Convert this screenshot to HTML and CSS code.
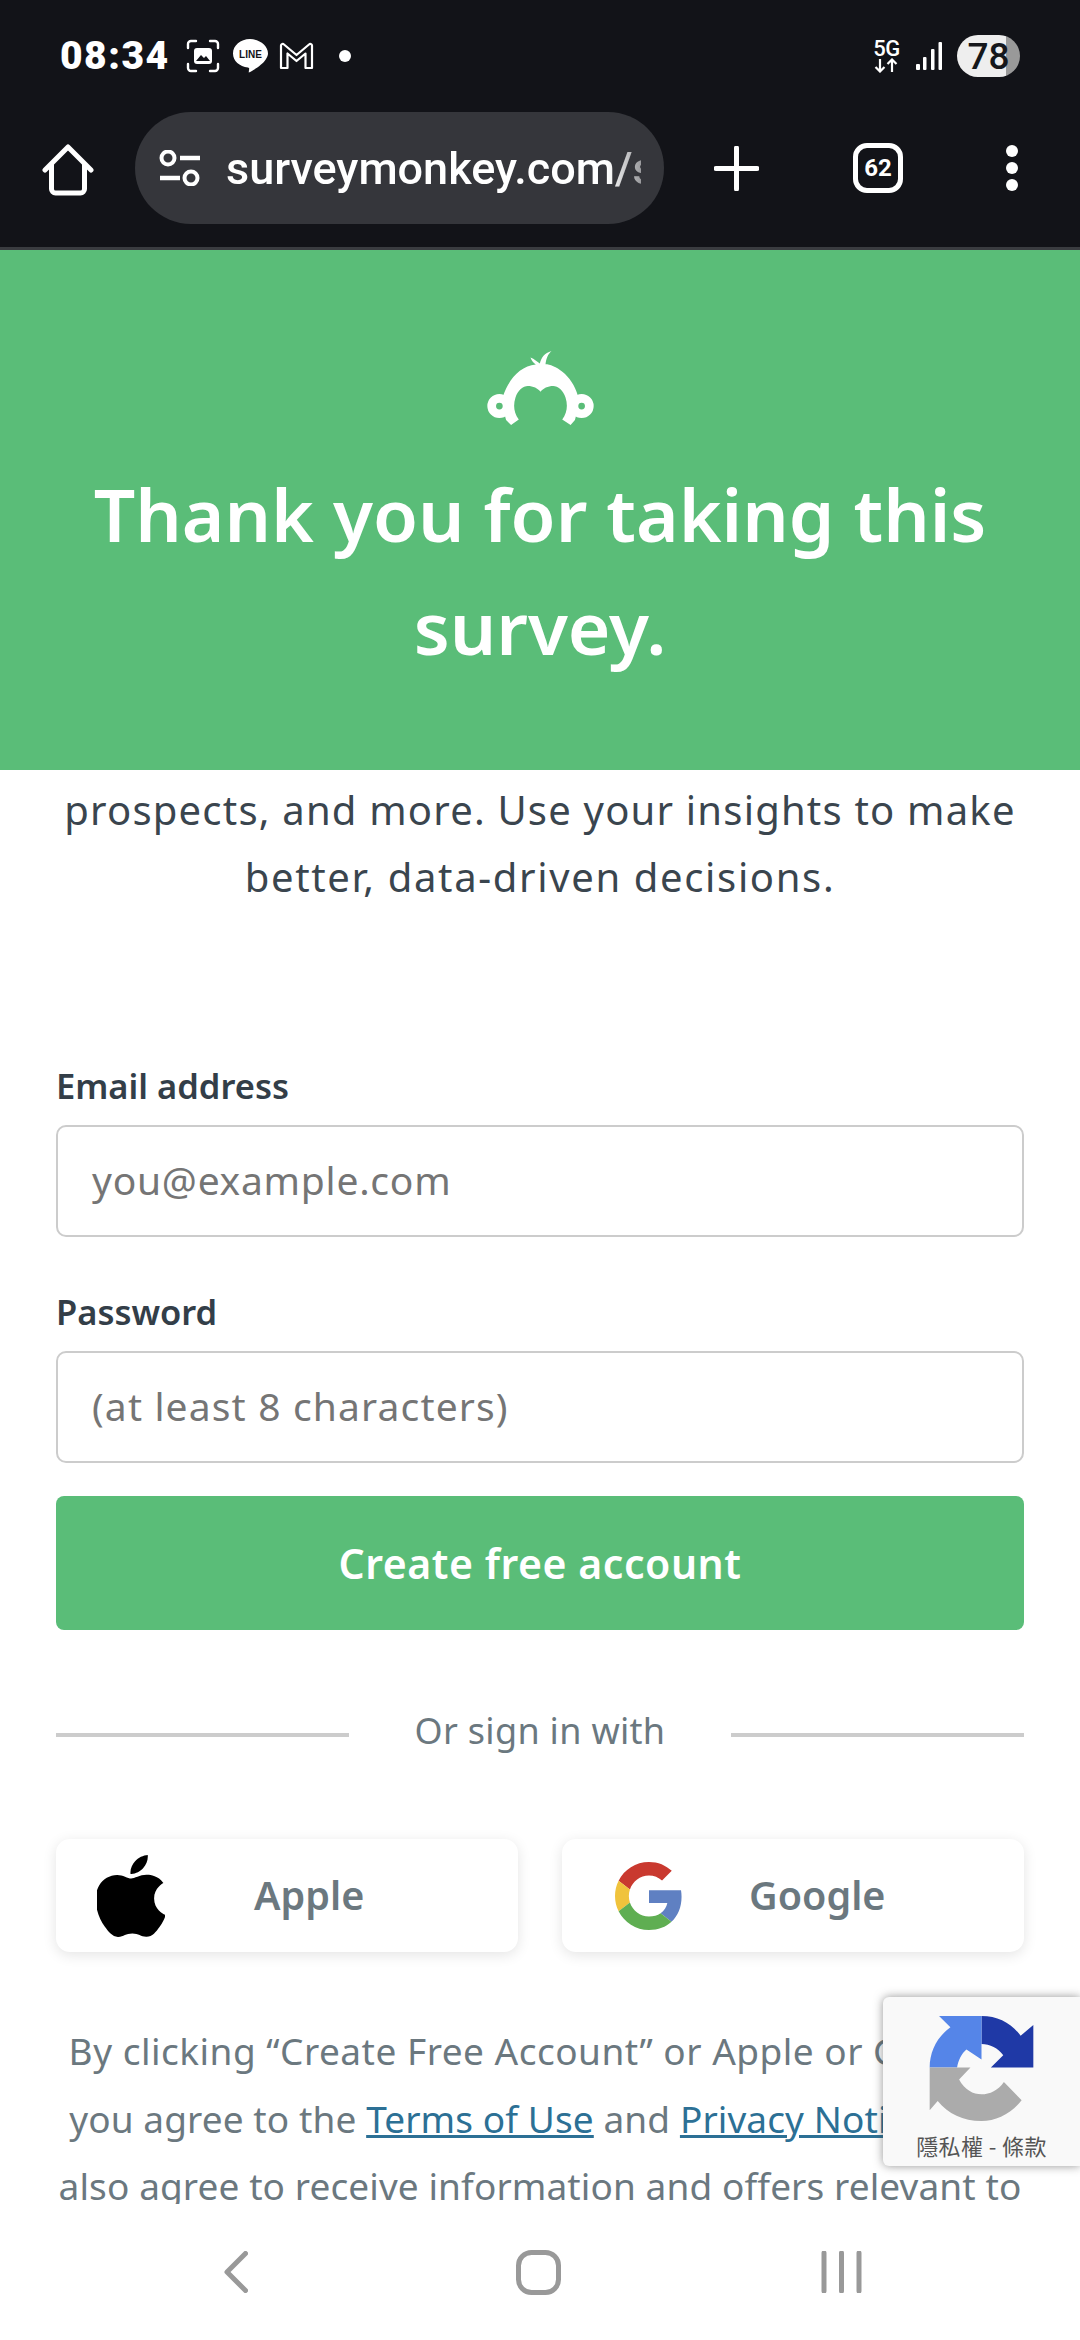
FILE: index.html
```html
<!DOCTYPE html>
<html lang="en">
<head>
<meta charset="utf-8">
<title>SurveyMonkey</title>
<link rel="stylesheet" href="styles.css">
</head>
<body>
<div class="screen">
  <header class="chrome">
    <div class="status">
      <span class="time">08:34</span>
      <svg class="ic-shot" viewBox="0 0 34 34"><path d="M2 9V5a3 3 0 0 1 3-3h5M24 2h5a3 3 0 0 1 3 3v4M32 25v4a3 3 0 0 1-3 3h-5M10 32H5a3 3 0 0 1-3-3v-4" fill="none" stroke="#fff" stroke-width="2.4" stroke-linecap="round"/><rect x="8" y="9" width="18" height="16" rx="3" fill="#fff"/><path d="M10 22l5-6 3 3 2-2 4 5z" fill="#121318"/></svg>
      <svg class="ic-line" viewBox="0 0 36 36"><path d="M18 1C8.500 1 1 7.500 1 15.500c0 7.500 6.500 13 15 14 1 .2 1.500.8 1 2.500l-.3 2.500c4-1.500 14-8 17-13 1.300-2 2.300-4 2.300-6C36 7.500 27.500 1 18 1z" fill="#fff"/><text x="18.500" y="19.500" class="line-txt" text-anchor="middle">LINE</text></svg>
      <svg class="ic-m" viewBox="0 0 35 28"><path d="M2 26V3.500C2 2 4 1.500 5 2.500L17.500 13 30 2.500c1-1 3-.5 3 1V26h-6.500V11.500l-9 7.500-9-7.500V26z" fill="none" stroke="#fff" stroke-width="2.200" stroke-linejoin="round"/></svg>
      <span class="dot"></span>
      <div class="status-right">
        <div class="net"><span class="net-5g">5G</span><svg class="net-arrows" viewBox="0 0 25 15"><path d="M6 1v12M1.500 9L6 13.500 10.500 9M18 14V2M13.500 6L18 1.500 22.500 6" fill="none" stroke="#fff" stroke-width="2.200"/></svg></div>
        <svg class="ic-signal" viewBox="0 0 26 30"><g fill="#fff"><rect x="0" y="23" width="4" height="6" rx="1"/><rect x="7" y="16" width="3.500" height="13" rx="1"/><rect x="15" y="8" width="3.500" height="21" rx="1"/><rect x="22.500" y="1" width="3.500" height="28" rx="1"/></g></svg>
        <div class="battery"><span class="battery-num">78</span></div>
      </div>
    </div>
    <div class="toolbar">
      <svg class="ic-home" viewBox="0 0 52 52"><path d="M3 26L26 3l23 23M9.500 21v24a4 4 0 0 0 4 4h25a4 4 0 0 0 4-4V21" fill="none" stroke="#fff" stroke-width="5" stroke-linecap="round" stroke-linejoin="round"/></svg>
      <div class="pill">
        <svg class="ic-tune" viewBox="0 0 42 36"><g fill="none" stroke="#fff" stroke-width="4"><circle cx="9" cy="8" r="6.500"/><circle cx="32" cy="28" r="6.500"/></g><path d="M21 8h20M1 28h20" stroke="#fff" stroke-width="4.500"/></svg>
        <span class="url">surveymonkey.com/s</span>
      </div>
      <svg class="ic-plus" viewBox="0 0 45 45"><path d="M22.500 2v41M2 22.500h41" stroke="#fff" stroke-width="5" stroke-linecap="round"/></svg>
      <div class="tabs">62</div>
      <div class="menu"><span></span><span></span><span></span></div>
    </div>
  </header>

  <section class="banner">
    <svg class="logo" viewBox="440 98 320 226"><g fill="none" stroke="#fff" stroke-width="26"><circle cx="477" cy="265" r="23"/><circle cx="723" cy="265" r="23"/></g><path fill="#fff" d="M497 307L512 322 535 305C520 285 518 262 525 240 532 218 548 205 562 205 578 205 592 212 600 222 608 212 622 205 638 205 652 205 668 218 675 240 682 262 680 285 665 305L690 322 703 307C710 285 712 260 712 235 695 170 640 140 615 140 617 122 622 110 633 100 612 106 602 120 598 138 590 132 582 125 570 120 573 130 580 136 586 141 540 145 505 185 488 235 488 260 490 285 497 307Z"/></svg>
    <h1 class="banner-title">Thank you for taking this<br>survey.</h1>
  </section>

  <main class="content">
    <p class="intro">prospects, and more. Use your insights to make<br><span class="intro-second">better, data-driven decisions.</span></p>
    <div class="label label-first">Email address</div>
    <div class="field">you@example.com</div>
    <div class="label label-next">Password</div>
    <div class="field field-wide">(at least 8 characters)</div>
    <div class="submit">Create free account</div>
    <div class="divider"><span class="rule"></span><span class="divider-text">Or sign in with</span><span class="rule"></span></div>
    <div class="socials">
      <div class="social">
        <svg class="ic-apple" viewBox="2.600 0 19 24" preserveAspectRatio="none"><path fill="#000" d="M12.152 6.896c-.948 0-2.415-1.078-3.96-1.04-2.04.027-3.91 1.183-4.961 3.014-2.117 3.675-.546 9.103 1.519 12.09 1.013 1.454 2.208 3.09 3.792 3.039 1.52-.065 2.09-.987 3.935-.987 1.831 0 2.35.987 3.96.948 1.637-.026 2.676-1.48 3.676-2.948 1.156-1.688 1.636-3.325 1.662-3.415-.039-.013-3.182-1.221-3.22-4.857-.026-3.04 2.48-4.494 2.597-4.559-1.429-2.09-3.623-2.324-4.39-2.376-2-.156-3.675 1.09-4.61 1.09zM15.53 3.83c.843-1.012 1.4-2.427 1.245-3.83-1.207.052-2.662.805-3.532 1.818-.78.896-1.454 2.338-1.273 3.714 1.338.104 2.715-.688 3.559-1.701"/></svg>
        <span class="social-name">Apple</span>
      </div>
      <div class="social">
        <svg class="ic-google" viewBox="0 0 48 48"><path fill="#c9392f" d="M24 9.500c3.540 0 6.710 1.220 9.210 3.600l6.850-6.850C35.900 2.380 30.470 0 24 0 14.620 0 6.510 5.380 2.560 13.220l7.980 6.190C12.430 13.720 17.740 9.500 24 9.500z"/><path fill="#5f80c2" d="M46.980 24.550c0-1.570-.15-3.090-.38-4.550H24v9.020h12.940c-.58 2.960-2.260 5.480-4.780 7.180l7.730 6c4.510-4.180 7.090-10.360 7.090-17.650z"/><path fill="#f0c33c" d="M10.530 28.590c-.48-1.450-.76-2.990-.76-4.590s.27-3.140.76-4.590l-7.980-6.190C.92 16.460 0 20.120 0 24c0 3.880.92 7.540 2.560 10.780l7.970-6.190z"/><path fill="#5fae52" d="M24 48c6.480 0 11.930-2.130 15.890-5.810l-7.730-6c-2.150 1.450-4.920 2.300-8.160 2.300-6.260 0-11.570-4.220-13.470-9.910l-7.980 6.190C6.510 42.620 14.620 48 24 48z"/></svg>
        <span class="social-name">Google</span>
      </div>
    </div>
    <p class="terms"><span class="terms-first">By clicking “Create Free Account” or Apple or Google,</span><br>you agree to the <a class="terms-link">Terms of Use</a> and <a class="terms-link">Privacy Notice</a>. You<br>also agree to receive information and offers relevant to</p>
    <aside class="recaptcha">
      <svg class="ic-recaptcha" viewBox="688 135 314 320"><path fill="#1f39a6" d="M845 138C895 138 935 160 962 197L1000 165V292H873L910 255C895 235 870 222 845 222Z"/><path fill="#5585e8" d="M845 138H718L752 172C712 200 690 245 690 292H772C775 272 785 250 800 238L845 268Z"/><path fill="#ababab" d="M690 292H812L778 328C795 360 820 372 845 372 870 372 895 360 912 335L965 390C935 428 890 452 845 452 790 452 745 430 714 392L690 420Z"/></svg>
      <span class="recaptcha-text">隱私權 - 條款</span>
    </aside>
  </main>

  <nav class="navbar">
    <svg class="nav-back" viewBox="0 0 24 42"><path d="M21.500 2.500L3 21l18.500 18.500" fill="none" stroke="#999" stroke-width="5" stroke-linecap="round" stroke-linejoin="round"/></svg>
    <svg class="nav-home" viewBox="0 0 45 45"><rect x="2.500" y="2.500" width="40" height="40" rx="13" fill="none" stroke="#999" stroke-width="5"/></svg>
    <svg class="nav-recent" viewBox="0 0 41 42"><path d="M3 2v38M20.500 2v38M38 2v38" stroke="#999" stroke-width="5" stroke-linecap="round"/></svg>
  </nav>
</div>
</body>
</html>
```
FILE: styles.css
```css
* { box-sizing: border-box; }
html, body { margin: 0; padding: 0; background: #fff; }
body { font-family: "Noto Sans", "Open Sans", sans-serif; }
.screen { width: 1080px; height: 2340px; display: flex; flex-direction: column; overflow: hidden; }

/* browser chrome */
.chrome { height: 250px; flex: none; background: #121318; border-bottom: 3px solid #3a3c40; }
.status { height: 112px; display: flex; align-items: center; padding: 0 60px; color: #fff; }
.time { font: 900 39px/1 Roboto, sans-serif; letter-spacing: 1.500px; width: 108px; white-space: nowrap; }
.ic-shot { width: 34px; height: 34px; margin-left: 18px; }
.ic-line { width: 36px; height: 36px; margin-left: 12px; }
.line-txt { font: 800 10px "Liberation Sans", sans-serif; fill: #121318; }
.ic-m { width: 35px; height: 28px; margin-left: 11px; }
.dot { width: 12px; height: 12px; border-radius: 50%; background: #fff; margin-left: 25px; }
.status-right { margin-left: auto; display: flex; align-items: center; }
.net { width: 25px; display: flex; flex-direction: column; align-items: center; }
.net-5g { font: 500 22px/19px Roboto, sans-serif; letter-spacing: -.5px; }
.net-arrows { width: 25px; height: 15px; }
.ic-signal { width: 26px; height: 30px; margin-left: 17px; }
.battery { width: 63px; height: 42px; margin-left: 15px; border-radius: 21px; background: linear-gradient(90deg, #eee 0 78%, #999 78% 100%); display: flex; align-items: center; justify-content: center; }
.battery-num { font: 500 37px/1 Roboto, sans-serif; color: #15171b; }

.toolbar { height: 112px; display: flex; align-items: center; padding-left: 42px; }
.ic-home { width: 52px; height: 52px; flex: none; margin-top: 4px; }
.pill { width: 529px; height: 112px; margin-left: 41px; border-radius: 56px; background: #35363b; display: flex; align-items: center; padding-left: 24px; position: relative; overflow: hidden; }
.ic-tune { width: 42px; height: 36px; flex: none; }
.url { margin-left: 25px; padding-top: 2px; font: 500 45px/1.15 Roboto, sans-serif; color: #fff; white-space: nowrap; width: 415px; overflow: hidden; -webkit-mask-image: linear-gradient(90deg, #000 92%, rgba(0,0,0,.5) 100%); mask-image: linear-gradient(90deg, #000 92%, rgba(0,0,0,.5) 100%); }
.ic-plus { width: 45px; height: 45px; margin-left: 50px; flex: none; }
.tabs { width: 50px; height: 50px; margin-left: 94px; border: 5px solid #fff; border-radius: 14px; color: #fff; font: 700 24px/40px Roboto, sans-serif; text-align: center; flex: none; }
.menu { margin-left: 103px; display: flex; flex-direction: column; gap: 5px; }
.menu span { width: 12px; height: 12px; border-radius: 50%; background: #fff; }

/* banner */
.banner { height: 520px; flex: none; background: #5abd78; display: flex; flex-direction: column; align-items: center; padding-top: 100px; color: #fff; }
.logo { width: 107px; height: 76px; flex: none; }
.banner-title { margin: 31px 0 0; font-size: 73px; font-weight: 600; line-height: 113px; text-align: center; }

/* form */
.content { flex: 1; min-height: 0; overflow: hidden; padding: 6px 56px 0; position: relative; color: #333e48; }
.intro { margin: 0; font-size: 40px; line-height: 67px; text-align: center; letter-spacing: 1.200px; white-space: nowrap; color: #3a454e; }
.intro-second { letter-spacing: 1.650px; }
.label { font-size: 34.500px; font-weight: 600; line-height: 46px; }
.label-first { margin-top: 153px; margin-bottom: 16px; }
.label-next { margin-top: 52px; margin-bottom: 16px; }
.field { height: 112px; border: 2px solid #ccc; border-radius: 10px; padding-left: 34px; font-size: 39px; line-height: 106px; color: #757575; letter-spacing: .750px; }
.field-wide { letter-spacing: 1.150px; }
.submit { height: 134px; margin-top: 33px; border-radius: 8px; background: #5abd78; color: #fff; font-size: 41px; font-weight: 600; line-height: 134px; text-align: center; letter-spacing: .550px; }
.divider { height: 67px; margin-top: 70px; display: flex; align-items: center; justify-content: space-between; }
.rule { width: 293px; height: 4px; background: #ccc; margin-top: 3px; }
.divider-text { font-size: 36px; color: #6b787f; line-height: 60px; letter-spacing: .300px; margin-top: -5px; }
.socials { display: flex; justify-content: space-between; margin-top: 72px; }
.social { width: 462px; height: 113px; border-radius: 14px; background: #fff; box-shadow: 0 3px 14px rgba(0,0,0,.11); display: flex; align-items: center; position: relative; }
.social-name { font-size: 39.500px; font-weight: 600; color: #6b787f; margin-top: -2px; }
.ic-apple { width: 68px; height: 82px; margin-left: 41px; margin-right: 89px; flex: none; }
.ic-google { width: 68px; height: 68px; margin-left: 53px; margin-right: 66px; flex: none; }
.terms { margin: 65px -30px 0; font-size: 37px; line-height: 67.500px; text-align: center; color: #6b787f; white-space: nowrap; letter-spacing: .100px; }
.terms-first { letter-spacing: .500px; }
.terms-link { color: #2c7095; text-decoration: underline; }
.recaptcha { position: absolute; right: 0; top: 1227px; width: 197px; height: 169px; background: #f9f9f9; border-radius: 6px 0 0 6px; box-shadow: 0 0 10px rgba(60,60,60,.55); display: flex; flex-direction: column; align-items: center; }
.ic-recaptcha { width: 105px; height: 107px; margin-top: 18px; flex: none; }
.recaptcha-text { font: 400 22px/26px "Noto Sans CJK TC", sans-serif; color: #555; margin-top: 10px; white-space: pre; letter-spacing: .400px; }

/* nav */
.navbar { height: 136px; flex: none; background: #fff; display: flex; align-items: center; padding-left: 224px; position: relative; z-index: 1; }
.nav-back { width: 24px; height: 42px; }
.nav-home { width: 45px; height: 45px; margin-left: 268px; }
.nav-recent { width: 41px; height: 42px; margin-left: 260px; }
```
